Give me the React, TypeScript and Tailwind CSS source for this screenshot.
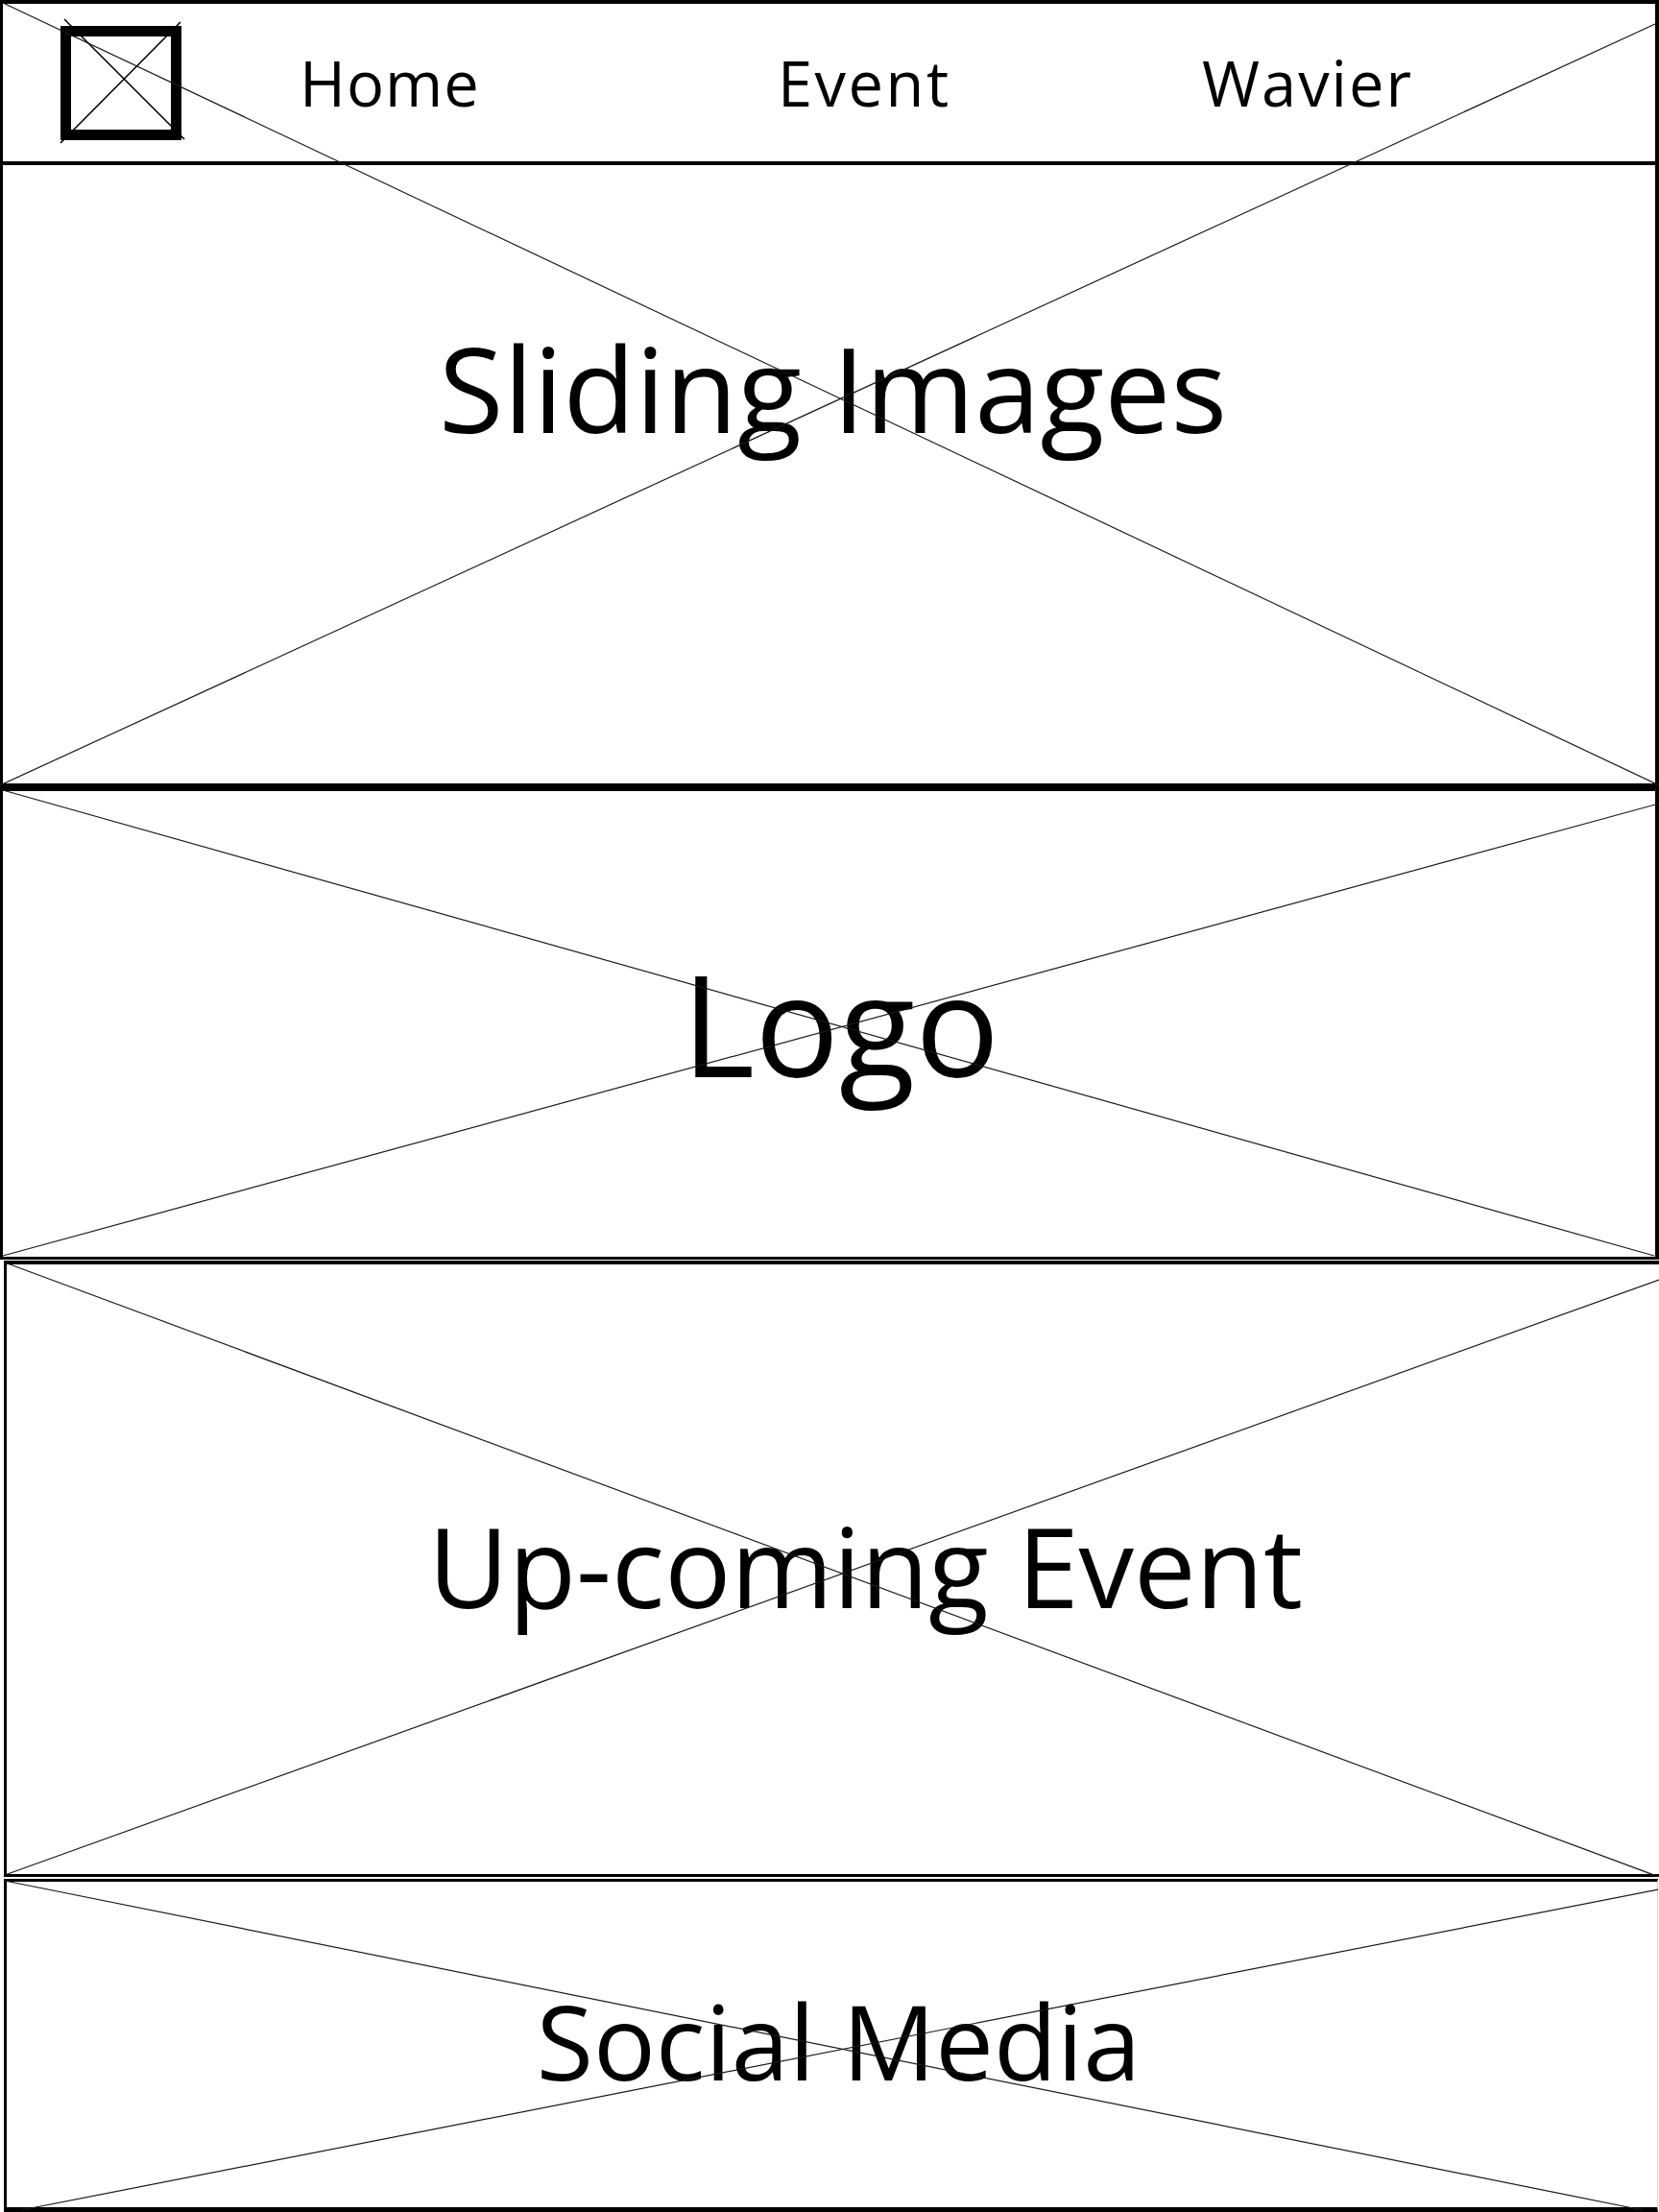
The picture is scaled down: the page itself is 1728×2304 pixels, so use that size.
import React from "react";

type Line = [number, number, number, number];

const Cross = ({ w, h, lines }: { w: number; h: number; lines: Line[] }) => (
  <svg
    className="absolute left-0 top-0 pointer-events-none"
    width={w}
    height={h}
    viewBox={`0 0 ${w} ${h}`}
  >
    {lines.map(([x1, y1, x2, y2], i) => (
      <line key={i} x1={x1} y1={y1} x2={x2} y2={y2} stroke="#1a1a1a" strokeWidth={1.2} />
    ))}
  </svg>
);

const LogoMark = () => (
  <svg width={126} height={119} viewBox="0 0 126 119" className="overflow-visible shrink-0">
    <rect x={5.5} y={5.5} width={115} height={108} fill="none" stroke="#000" strokeWidth={11} />
    <line x1={4} y1={-7} x2={129} y2={118} stroke="#000" strokeWidth={1.6} />
    <line x1={125} y1={-4} x2={0} y2={122} stroke="#000" strokeWidth={1.6} />
  </svg>
);

const font = { fontFamily: '"Open Sans", "Noto Sans", sans-serif' };

export default function App() {
  return (
    <div className="w-[1728px] h-[2304px] overflow-hidden bg-white text-black" style={font}>
      {/* header + slider share one cross */}
      <section className="relative">
        <div className="h-[820px] flex flex-col border-t-4 border-l-[3px] border-r-4 border-b-4 border-black">
          <nav className="h-[168px] shrink-0 flex items-center border-b-4 border-black pl-[60px]">
            <LogoMark />
            <a className="ml-[123px] w-[498px] text-[65px] leading-none tracking-[1px]">Home</a>
            <a className="w-[442px] text-[65px] leading-none tracking-[2.5px]">Event</a>
            <a className="text-[65px] leading-none tracking-[2px]">Wavier</a>
          </nav>
          <div className="flex-1 flex justify-center pl-[8px] pt-[170px]">
            <h2 className="text-[123px] leading-none font-normal">Sliding Images</h2>
          </div>
        </div>
        <Cross
          w={1728}
          h={820}
          lines={[
            [3, 3, 1728, 818],
            [0, 818, 1724, 25],
          ]}
        />
      </section>

      <section className="relative">
        <div className="h-[492px] flex justify-center pl-[24px] pt-[169px] border-t-4 border-b-[3px] border-l-[3px] border-r-4 border-black">
          <h2 className="text-[146px] leading-none font-normal">Logo</h2>
        </div>
        <Cross
          w={1728}
          h={492}
          lines={[
            [3, 3, 1723, 488],
            [3, 488, 1728, 17],
          ]}
        />
      </section>

      <section className="relative mt-[1px] ml-[4px] w-[1728px]">
        <div className="h-[642px] flex justify-center pl-[64px] pt-[256px] border-t-4 border-b-[3px] border-l-[3px] border-black">
          <h2 className="text-[115px] leading-none font-normal">Up-coming Event</h2>
        </div>
        <Cross
          w={1728}
          h={642}
          lines={[
            [1, 2, 1724, 642],
            [1, 640, 1724, 20],
          ]}
        />
      </section>

      <section className="relative mt-[2px] ml-[4px] w-[1723px]">
        <div className="h-[347px] flex justify-center pl-[14px] pt-[112px] border-t-[3px] border-b-[5px] border-l-[3px] border-r border-black border-r-gray-300">
          <h2 className="text-[108px] leading-none font-normal">Social Media</h2>
        </div>
        <Cross
          w={1723}
          h={347}
          lines={[
            [1, 2, 1707, 345],
            [18, 345, 1724, 11],
          ]}
        />
      </section>
    </div>
  );
}
